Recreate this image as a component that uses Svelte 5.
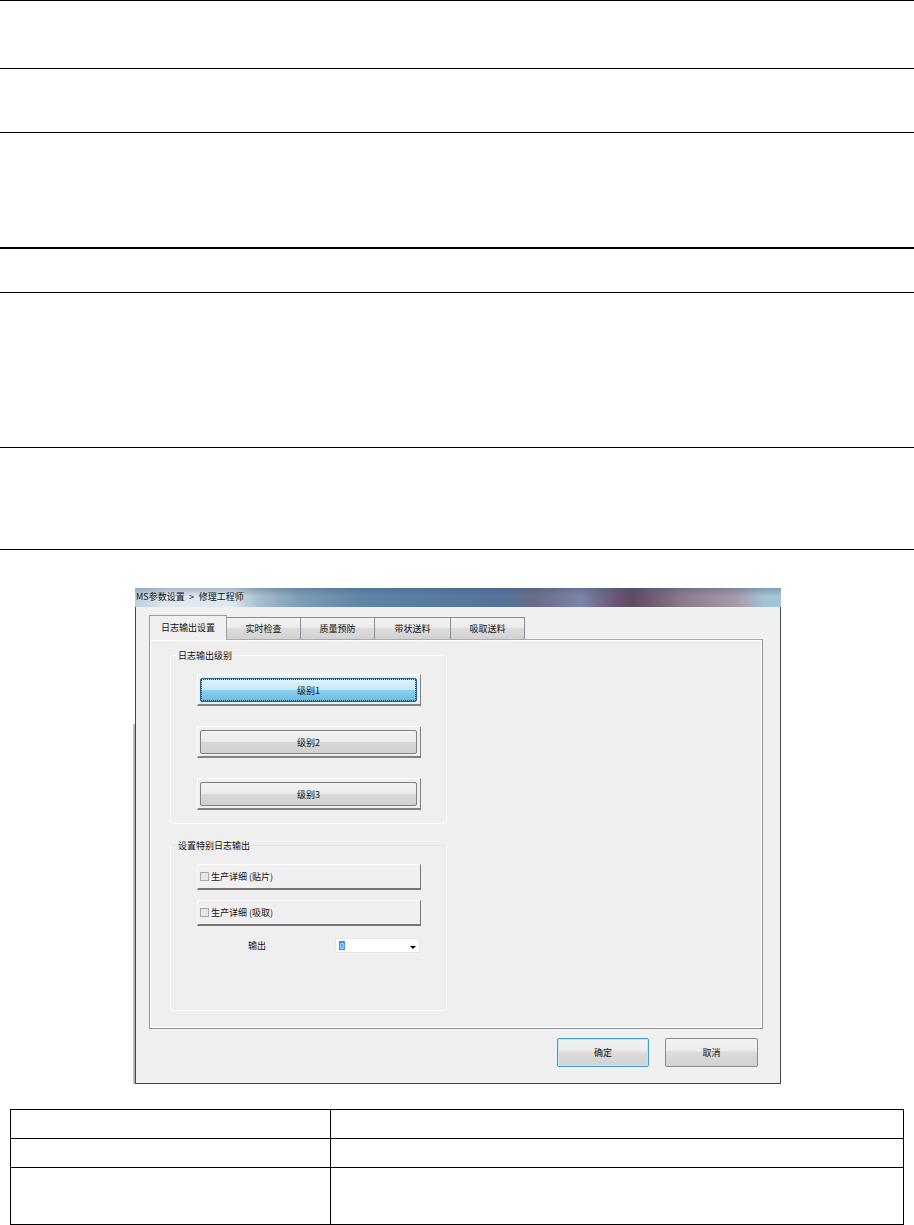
<script lang="ts">
  // vertical distance from each rule to the next one
  const rules = [
    { gap: 68, thick: false },
    { gap: 64, thick: false },
    { gap: 115, thick: false },
    { gap: 45, thick: true },
    { gap: 155, thick: false },
    { gap: 102, thick: false },
    { gap: 39, thick: false },
  ];

  const tabs = ["日志输出设置", "实时检查", "质量预防", "带状送料", "吸取送料"];
  const levels = ["级别1", "级别2", "级别3"];
  const details = ["生产详细 (贴片)", "生产详细 (吸取)"];
  const rows = [29, 29, 57];
</script>

<div class="page">
  {#each rules as rule}
    <div class="rule" class:thick={rule.thick} style="height: {rule.gap}px"></div>
  {/each}

  <div class="dialog">
    <div class="titlebar">MS参数设置 &gt; 修理工程师</div>
    <div class="client">
      <div class="tabs">
        {#each tabs as tab, i}
          <div class="tab" class:active={i === 0}>{tab}</div>
        {/each}
      </div>
      <div class="pane">
        <fieldset class="group first">
          <legend>日志输出级别</legend>
          {#each levels as level, i}
            <div class="frame">
              <button class="level" class:selected={i === 0} type="button">{level}</button>
            </div>
          {/each}
        </fieldset>
        <fieldset class="group second">
          <legend>设置特别日志输出</legend>
          {#each details as detail}
            <div class="check-row"><span class="box"></span>{detail}</div>
          {/each}
          <div class="output">
            <span class="output-label">输出</span>
            <div class="combo"><span class="sel">0</span><span class="arrow"></span></div>
          </div>
        </fieldset>
      </div>
      <div class="actions">
        <button class="action default" type="button">确定</button>
        <button class="action" type="button">取消</button>
      </div>
    </div>
  </div>

  <div class="table">
    {#each rows as h}
      <div class="row" style="height: {h}px">
        <div class="cell left"></div>
        <div class="cell"></div>
      </div>
    {/each}
  </div>
</div>

<style>
  :global(body) {
    margin: 0;
    background: #fff;
  }

  .page {
    height: 1225px;
    overflow: hidden;
    font-family: "Noto Sans CJK SC", "Liberation Sans", sans-serif;
    font-size: 9px;
    color: #111;
  }

  .rule {
    box-sizing: border-box;
    border-top: 1px solid #000;
  }

  .rule.thick {
    border-top-width: 2px;
  }

  .dialog {
    position: relative;
    box-sizing: border-box;
    width: 646px;
    height: 496px;
    margin-left: 135px;
    border: 1px solid #3a4a5e;
    border-top: none;
    background: #f0f0f0;
    display: flex;
    flex-direction: column;
  }

  /* blurred desktop showing through the lower part of the left window edge */
  .dialog::before {
    content: "";
    position: absolute;
    left: -3px;
    top: 136px;
    bottom: -1px;
    width: 2px;
    background: linear-gradient(90deg, #ccd5e0, #97a7bc);
  }

  .titlebar {
    height: 19px;
    margin: 0 -1px;
    padding-left: 1px;
    line-height: 17px;
    word-spacing: 2.5px;
    flex: none;
    background:
      linear-gradient(rgba(60, 90, 130, 0.35) 0, rgba(60, 90, 130, 0) 45%),
      linear-gradient(
        90deg,
        #bcd0de 0,
        #dfe8ef 5%,
        #dfe8ef 15%,
        #a9bfd0 19%,
        #7f9fb8 25%,
        #5f85a6 35%,
        #55789c 50%,
        #55729a 57%,
        #6d6a88 62%,
        #7a85a8 69%,
        #6a5a78 74%,
        #5f4a62 77%,
        #8c7c8c 85%,
        #a89ba8 93%,
        #a5c3d6 97.5%
      );
  }

  .client {
    flex: 1;
    padding: 9px 17px 0 13px;
    display: flex;
    flex-direction: column;
  }

  .tabs {
    display: flex;
    height: 23px;
    align-items: flex-end;
    position: relative;
    z-index: 1;
  }

  .tab {
    box-sizing: border-box;
    width: 74px;
    height: 22px;
    padding-top: 2px;
    line-height: 18px;
    text-align: center;
    border: 1px solid #8c8f96;
    border-left: none;
    border-bottom: none;
    background: linear-gradient(#f2f2f2 0, #ebebeb 45%, #dddddd 46%, #d2d2d2 100%);
  }

  .tab:nth-child(4) {
    width: 76px;
  }

  .tab.active {
    width: 78px;
    height: 25px;
    padding-top: 3px;
    margin-bottom: -1px;
    border: 1px solid #9a9da3;
    border-bottom: none;
    background: #f0f0f0;
  }

  .pane {
    box-sizing: border-box;
    height: 390px;
    padding: 10px 0 0 20px;
    border: 1px solid #8f9197;
    border-top-color: #a9abb0;
    box-shadow: inset -1px -1px 0 #fff, inset 1px 1px 0 #fff;
    background: #efefef;
  }

  .group {
    box-sizing: border-box;
    width: 277px;
    margin: 0;
    padding: 0 0 0 26px;
    border: 1px solid #fafafa;
    border-radius: 2px;
  }

  .group legend {
    margin-left: -20px;
    padding: 0 1px;
    line-height: 11px;
    font-size: 9px;
  }

  .group.first {
    height: 174px;
    padding-top: 13px;
  }

  .group.second {
    height: 171px;
    margin-top: 16px;
    padding-top: 13px;
    border-top-color: #d9e8f2;
  }

  .frame {
    box-sizing: border-box;
    width: 224px;
    height: 32px;
    margin-bottom: 20px;
    padding: 3px 3px 3px 2px;
    border-top: 1px solid #fff;
    border-left: 1px solid #fff;
    border-right: 1px solid #808080;
    border-bottom: 2px solid #808080;
  }

  .level {
    display: block;
    box-sizing: border-box;
    width: 100%;
    height: 24px;
    padding: 0;
    font: inherit;
    color: inherit;
    border: 1px solid #808080;
    border-radius: 2px;
    background: linear-gradient(#f3f3f3 0, #ebebeb 48%, #d9d9d9 49%, #d0d0d0 100%);
  }

  .level.selected {
    border: 1px solid #2c628b;
    outline: 1px dotted #333;
    outline-offset: -2px;
    background: linear-gradient(#e3f4fc 0, #c6e8f8 48%, #8fd0ee 49%, #6dbbe2 100%);
  }

  .check-row {
    box-sizing: border-box;
    width: 224px;
    height: 26px;
    margin-bottom: 10px;
    padding-left: 2px;
    display: flex;
    align-items: center;
    gap: 2px;
    background: #f0f0f0;
    border-top: 1px solid #fff;
    border-left: 1px solid #fff;
    border-right: 1px solid #777;
    border-bottom: 2px solid #777;
  }

  .box {
    box-sizing: border-box;
    width: 9px;
    height: 9px;
    border: 1px solid #a8a8a8;
    background: #e6e6e6;
  }

  .output {
    display: flex;
    align-items: center;
    height: 15px;
    margin-top: 12px;
  }

  .output-label {
    margin-left: 51px;
    width: 87px;
  }

  .combo {
    box-sizing: border-box;
    width: 85px;
    height: 15px;
    padding: 2px 2px 0 3px;
    display: flex;
    justify-content: space-between;
    background: #fff;
    border: 1px solid #e6e6e6;
  }

  .sel {
    width: 6px;
    height: 9px;
    line-height: 9px;
    font-size: 8px;
    text-align: center;
    color: #fff;
    background: #3c8ef0;
  }

  .arrow {
    margin: 5px 1px 0 0;
    width: 0;
    height: 0;
    border: 3px solid transparent;
    border-top-color: #000;
  }

  .actions {
    display: flex;
    justify-content: flex-end;
    gap: 16px;
    padding: 9px 5px 0 0;
  }

  .action {
    box-sizing: border-box;
    width: 93px;
    height: 29px;
    padding: 0;
    font: inherit;
    color: inherit;
    border: 1px solid #8a8a8a;
    border-radius: 2px;
    background: linear-gradient(#f2f2f2 0, #ebebeb 45%, #dcdcdc 47%, #d2d2d2 100%);
  }

  .action.default {
    width: 92px;
    border-color: #3c9fd0;
    box-shadow: inset 0 0 0 1px #c5e8f6;
  }

  .table {
    box-sizing: border-box;
    width: 894px;
    margin: 25px 0 0 10px;
    border-top: 1px solid #000;
    border-left: 1px solid #000;
    border-right: 1px solid #000;
  }

  .row {
    box-sizing: border-box;
    display: flex;
    border-bottom: 1px solid #000;
  }

  .cell {
    flex: 1;
  }

  .cell.left {
    flex: none;
    width: 319px;
    border-right: 1px solid #000;
  }
</style>
